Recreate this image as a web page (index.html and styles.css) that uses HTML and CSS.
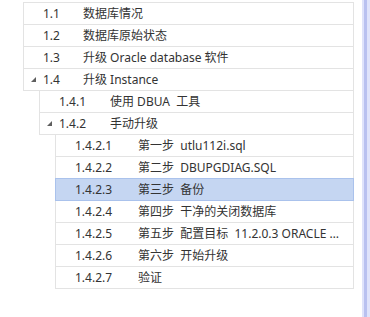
FILE: index.html
```html
<!DOCTYPE html>
<html lang="zh-CN">
<head>
    <meta charset="UTF-8">
    <title>升级目录</title>
    <link rel="stylesheet" href="styles.css">
</head>
<body>
    <div class="window">
        <div class="tree">
            <div class="node lv1"><span class="toggle"></span><span class="num">1.1</span><span class="title">数据库情况</span></div>
            <div class="node lv1"><span class="toggle"></span><span class="num">1.2</span><span class="title">数据库原始状态</span></div>
            <div class="node lv1"><span class="toggle"></span><span class="num">1.3</span><span class="title">升级 Oracle database 软件</span></div>
            <div class="node lv1">
                <span class="toggle"><svg width="5" height="5" viewBox="0 0 5 5"><polygon points="5,0 5,5 0,5"/></svg></span>
                <span class="num">1.4</span><span class="title">升级 Instance</span>
            </div>
            <div class="node lv2"><span class="toggle"></span><span class="num">1.4.1</span><span class="title">使用 DBUA&nbsp; 工具</span></div>
            <div class="node lv2">
                <span class="toggle"><svg width="5" height="5" viewBox="0 0 5 5"><polygon points="5,0 5,5 0,5"/></svg></span>
                <span class="num">1.4.2</span><span class="title">手动升级</span>
            </div>
            <div class="node lv3"><span class="toggle"></span><span class="num">1.4.2.1</span><span class="title">第一步&nbsp; utlu112i.sql</span></div>
            <div class="node lv3"><span class="toggle"></span><span class="num">1.4.2.2</span><span class="title">第二步&nbsp; DBUPGDIAG.SQL</span></div>
            <div class="node lv3 selected"><span class="toggle"></span><span class="num">1.4.2.3</span><span class="title">第三步&nbsp; 备份</span></div>
            <div class="node lv3"><span class="toggle"></span><span class="num">1.4.2.4</span><span class="title">第四步&nbsp; 干净的关闭数据库</span></div>
            <div class="node lv3"><span class="toggle"></span><span class="num">1.4.2.5</span><span class="title">第五步&nbsp; 配置目标&nbsp; 11.2.0.3 ORACLE HOME</span></div>
            <div class="node lv3"><span class="toggle"></span><span class="num">1.4.2.6</span><span class="title">第六步&nbsp; 开始升级</span></div>
            <div class="node lv3"><span class="toggle"></span><span class="num">1.4.2.7</span><span class="title">验证</span></div>
        </div>
        <div class="edge"></div>
    </div>
</body>
</html>
```

FILE: styles.css
```css
body {
    margin: 0;
    padding: 0;
    background-color: #ffffff;
    color: #333333;
    font-family: "Noto Sans", "Noto Sans CJK SC", sans-serif;
    font-size: 12px;
}

.window {
    display: flex;
    height: 317px;
}

.tree {
    flex: none;
    width: 331px;
    padding: 2px 0 0 23px;
}

.edge {
    flex: none;
    width: 8px;
    margin-left: auto;
    background: linear-gradient(to right, #dfe3fb 0 2px, #b9c1f0 2px 5px, #dfe3fb 5px);
}

.node {
    display: flex;
    align-items: center;
    height: 21px;
    line-height: 21px;
    border: 1px solid #e3e3e3;
    border-top: none;
    white-space: nowrap;
}

.node:first-child {
    border-top: 1px solid #e3e3e3;
}

.lv2 {
    margin-left: 16px;
}

.lv3 {
    margin-left: 32px;
}

.toggle {
    flex: none;
    width: 19px;
    display: flex;
    align-items: center;
}

.toggle svg {
    margin-left: 7px;
    fill: #5e5e5e;
}

.num {
    flex: none;
}

.lv1 .num {
    width: 40px;
}

.lv2 .num {
    width: 51px;
}

.lv3 .num {
    width: 63px;
}

.title {
    flex: 1;
    min-width: 0;
    overflow: hidden;
    text-overflow: ellipsis;
    padding-right: 10px;
}

.selected {
    background-color: #c5d6f2;
    border-color: #aac2ec;
    box-shadow: 0 -1px 0 #aac2ec;
}
```
